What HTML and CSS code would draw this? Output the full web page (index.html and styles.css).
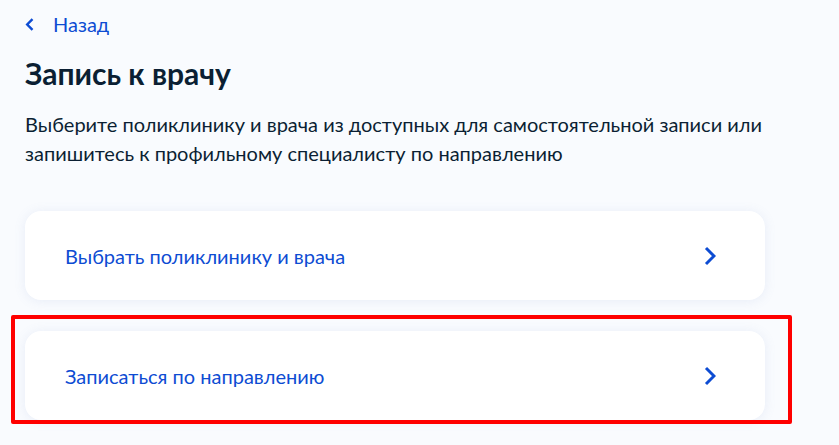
FILE: index.html
```html
<!DOCTYPE html>
<html lang="ru">
<head>
  <meta charset="UTF-8" />
  <title>Запись к врачу</title>
  <link rel="stylesheet" href="styles.css">
</head>
<body>
  <div class="page">
    <a class="back" href="#">
      <svg class="back-icon" width="9" height="13" viewBox="0 0 9 13">
        <path d="M7.5 1.2 L2.2 6.5 L7.5 11.8" fill="none" stroke="#0d4cd3" stroke-width="2.4" />
      </svg>
      <span>Назад</span>
    </a>

    <h1 class="title">Запись к врачу</h1>

    <p class="lead">Выберите поликлинику и врача из доступных для самостоятельной записи или запишитесь к профильному специалисту по направлению</p>

    <div class="options">
      <a class="option" href="#">
        <span>Выбрать поликлинику и врача</span>
        <svg class="arrow" width="12" height="20" viewBox="0 0 12 20">
          <path d="M2 2 L10 10 L2 18" fill="none" stroke="#0d4cd3" stroke-width="3" />
        </svg>
      </a>
      <div class="option-wrap">
        <a class="option" href="#">
          <span>Записаться по направлению</span>
          <svg class="arrow" width="12" height="20" viewBox="0 0 12 20">
            <path d="M2 2 L10 10 L2 18" fill="none" stroke="#0d4cd3" stroke-width="3" />
          </svg>
        </a>
        <!-- выделение на скриншоте -->
        <div class="highlight"></div>
      </div>
    </div>
  </div>
</body>
</html>
```

FILE: styles.css
```css
* { margin: 0; padding: 0; box-sizing: border-box; }

body {
  font-family: Lato, "Liberation Sans", sans-serif;
  background: #f9fbfe;
  color: #0b1f33;
}

.page {
  width: 765px;
  padding: 12px 0 40px 25px;
}

.back {
  display: flex;
  align-items: center;
  gap: 19px;
  font-size: 20px;
  line-height: 24px;
  color: #0d4cd3;
  text-decoration: none;
}

.title {
  margin-top: 19px;
  font-size: 30px;
  line-height: 36px;
  font-weight: 700;
}

.lead {
  margin-top: 19px;
  font-size: 20px;
  line-height: 29px;
}

.options {
  margin-top: 43px;
  display: flex;
  flex-direction: column;
  gap: 31px;
}

.option-wrap { position: relative; }

.option {
  display: flex;
  align-items: center;
  justify-content: space-between;
  height: 89px;
  padding: 0 49px 0 40px;
  background: #fff;
  border-radius: 16px;
  box-shadow: 0 1px 12px rgba(106, 132, 200, 0.12);
  font-size: 20px;
  color: #0d4cd3;
  text-decoration: none;
}

.highlight {
  position: absolute;
  left: -14px;
  top: -16px;
  right: -27px;
  bottom: -4px;
  border: 4px solid #ff0000;
  border-radius: 2px;
}
```
